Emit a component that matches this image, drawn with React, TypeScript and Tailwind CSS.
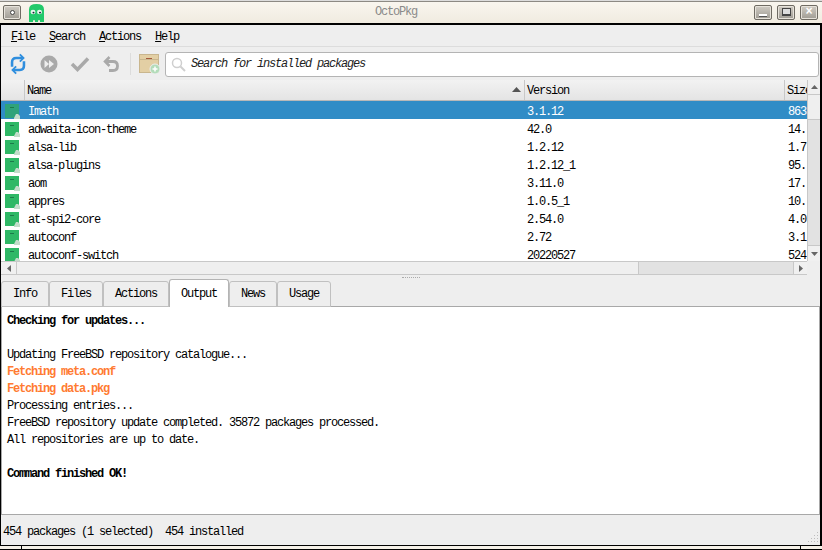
const font = { fontFamily: '"Liberation Mono", monospace' };

const packages = [
  ['Imath', '3.1.12', '863'],
  ['adwaita-icon-theme', '42.0', '14.'],
  ['alsa-lib', '1.2.12', '1.7'],
  ['alsa-plugins', '1.2.12_1', '95.'],
  ['aom', '3.11.0', '17.'],
  ['appres', '1.0.5_1', '10.'],
  ['at-spi2-core', '2.54.0', '4.0'],
  ['autoconf', '2.72', '3.1'],
  ['autoconf-switch', '20220527', '524'],
];

const outputLines = [
  { text: 'Checking for updates...', bold: true },
  { text: '' },
  { text: 'Updating FreeBSD repository catalogue...' },
  { text: 'Fetching meta.conf', orange: true },
  { text: 'Fetching data.pkg', orange: true },
  { text: 'Processing entries...' },
  { text: 'FreeBSD repository update completed. 35872 packages processed.' },
  { text: 'All repositories are up to date.' },
  { text: '' },
  { text: 'Command finished OK!', bold: true },
];

const tabs = ['Info', 'Files', 'Actions', 'Output', 'News', 'Usage'];
const tabWidths: Record<string, string> = {
  Info: 'w-[48px]',
  Files: 'w-[54px]',
  Actions: 'w-[66px]',
  News: 'w-[48px]',
  Usage: 'w-[54px]',
};

function WinButton({ children }: { children: React.ReactNode }) {
  return (
    <div className="mt-[1px] flex h-[15px] w-[18px] items-center justify-center rounded-[2px] border border-[#6f6b63] bg-gradient-to-b from-[#d0ccc4] to-[#a09c94] shadow-[inset_0_0_0_1px_#e6e2da]">
      {children}
    </div>
  );
}

function Ghost() {
  return (
    <svg width="15" height="18" viewBox="0 0 15 20" preserveAspectRatio="none">
      <path d="M0 20V6Q0 0 7.500 0T15 6V20H11V18H9V20H6V18H4V20Z" fill="#22c96b" />
      <circle cx="4" cy="9" r="2.500" fill="#e8f5ec" />
      <circle cx="10.500" cy="9" r="2.500" fill="#e8f5ec" />
      <circle cx="4.500" cy="9.500" r="1" fill="#123" />
      <circle cx="11" cy="9.500" r="1" fill="#123" />
    </svg>
  );
}

function PackageIcon({ selected }: { selected?: boolean }) {
  return (
    <svg width="15" height="15" viewBox="0 0 15 15" className="ml-[4px] mt-[1px]">
      <rect x="0" y="0" width="14" height="14" fill={selected ? '#2fa37a' : '#2fb866'} />
      <rect x="5" y="3" width="4" height="1" fill="#1c7a4a" />
      <path d="M9 14L11 10H13L15 12V15H9Z" fill="#c4dccb" />
    </svg>
  );
}

function Toolbar() {
  return (
    <div className="flex h-[33px] items-center bg-[#eeeeee] pl-[8px] pt-[1px]">
      <svg width="18" height="22" viewBox="0 0 18 24" fill="none" stroke="#2f8ede" strokeWidth="2.800">
        <path d="M14 5.500H7Q2.500 5.500 2.500 10V15" />
        <path d="M4 18.500H11Q15.500 18.500 15.500 14V9" />
        <path d="M11 1.500L15 5.500L11 9.500" strokeWidth="2" />
        <path d="M7 14.500L3 18.500L7 22.500" strokeWidth="2" />
      </svg>
      <svg width="18" height="18" viewBox="0 0 18 18" className="ml-[13px]">
        <circle cx="9" cy="9" r="8.500" fill="#a9a9a9" />
        <path d="M4.500 5V13L9 9ZM9 5V13L14 9Z" fill="#eeeeee" />
      </svg>
      <svg width="20" height="16" viewBox="0 0 20 16" className="ml-[12px]" fill="none" stroke="#a9a9a9" strokeWidth="3.500">
        <path d="M2 8L7.500 13.500L18 2.500" />
      </svg>
      <svg width="16" height="16" viewBox="0 0 16 16" className="ml-[13px]" fill="none" stroke="#a9a9a9" strokeWidth="2.800">
        <path d="M3 5.500H10Q14.500 5.500 14.500 10T10 14.500H6" />
        <path d="M6.500 1L2 5.500L6.500 10" strokeWidth="2.500" />
      </svg>
      <div className="ml-[11px] h-[22px] w-px bg-[#dcdcdc]" />
      <svg width="22" height="22" viewBox="0 0 22 22" className="ml-[8px]">
        <rect x="0.500" y="1.500" width="19" height="18" fill="#e3cfa4" stroke="#c9b68e" />
        <path d="M0 6.500H20" stroke="#c9b68e" />
        <rect x="7" y="5" width="6" height="1" fill="#a5593c" />
        <circle cx="16" cy="16" r="5" fill="#b3dcb9" stroke="#eeeeee" />
        <path d="M16 13.500V18.500M13.500 16H18.500" stroke="#ffffff" strokeWidth="1.500" />
      </svg>
      <div className="ml-[4px] flex h-[25px] w-[654px] items-center rounded-[3px] border border-[#b4b4b4] bg-white pl-[5px]">
        <svg width="15" height="15" viewBox="0 0 15 15" fill="none" stroke="#cfcfcf" strokeWidth="1.500">
          <circle cx="6" cy="6" r="4.500" />
          <path d="M9.500 9.500L14 14" strokeWidth="2" />
        </svg>
        <span className="ml-[5px] text-[12px] italic tracking-[-1.2px] text-[#222]">
          Search for installed packages
        </span>
      </div>
    </div>
  );
}

function PackageTable() {
  return (
    <div className="flex h-[181px] shrink-0">
      <div className="flex min-w-0 flex-1 flex-col">
        <div className="grid h-[21px] shrink-0 grid-cols-[24px_500px_260px_1fr] border-b border-[#b8b8b8] bg-gradient-to-b from-[#f2f2f2] to-[#e4e4e4] text-[12px] tracking-[-1.2px] text-black">
          <div className="border-r border-[#c8c8c8]" />
          <div className="relative flex items-center border-r border-[#c8c8c8] pl-[2px] pt-[2px]">
            Name
            <svg width="9" height="5" viewBox="0 0 9 5" className="absolute right-[3px] top-[7px]">
              <path d="M0 5L4.500 0L9 5Z" fill="#555" />
            </svg>
          </div>
          <div className="flex items-center border-r border-[#c8c8c8] pl-[2px] pt-[2px]">Version</div>
          <div className="flex items-center overflow-hidden pl-[2px] pt-[2px]">Size</div>
        </div>
        <div className="min-h-0 flex-1 overflow-hidden bg-white">
          {packages.map(([name, version, size], i) => (
            <div
              key={name}
              className={`grid h-[18px] grid-cols-[24px_500px_260px_1fr] items-center text-[12px] tracking-[-1.2px] ${i === 0 ? 'bg-[#308cc6] text-white' : 'text-black'}`}
            >
              <PackageIcon selected={i === 0} />
              <div className="pl-[3px] pt-[2px]">{name}</div>
              <div className="pl-[2px] pt-[2px]">{version}</div>
              <div className="overflow-hidden pl-[3px] pt-[2px]">{size}</div>
            </div>
          ))}
        </div>
      </div>
      <div className="flex w-[13px] shrink-0 flex-col border-l border-[#c8c8c8] bg-[#e2e2e2]">
        <div className="flex h-[15px] items-center justify-center border-b border-[#c8c8c8] bg-[#f0f0f0]">
          <svg width="7" height="4" viewBox="0 0 7 4"><path d="M0 4L3.500 0L7 4Z" fill="#666" /></svg>
        </div>
        <div className="h-[25px] border-b border-[#c8c8c8] bg-[#efefef]" />
        <div className="flex-1" />
        <div className="flex h-[16px] items-center justify-center border-t border-[#c8c8c8] bg-[#f0f0f0]">
          <svg width="7" height="4" viewBox="0 0 7 4"><path d="M0 0L3.500 4L7 0Z" fill="#666" /></svg>
        </div>
      </div>
    </div>
  );
}

function HorizontalScroll() {
  return (
    <div className="flex h-[14px] shrink-0 bg-[#eeeeee]">
      <div className="flex flex-1 border-y border-[#c8c8c8]">
        <div className="flex w-[16px] items-center justify-center border-r border-[#c8c8c8] bg-[#f0f0f0]">
          <svg width="4" height="7" viewBox="0 0 4 7"><path d="M4 0L0 3.500L4 7Z" fill="#666" /></svg>
        </div>
        <div className="w-[622px] border-r border-[#c8c8c8] bg-[#efefef]" />
        <div className="flex-1 bg-[#e2e2e2]" />
        <div className="flex w-[14px] items-center justify-center border-l border-[#c8c8c8] bg-[#f0f0f0]">
          <svg width="4" height="7" viewBox="0 0 4 7"><path d="M0 0L4 3.500L0 7Z" fill="#666" /></svg>
        </div>
      </div>
      <div className="w-[13px]" />
    </div>
  );
}

export default function App() {
  return (
    <div className="flex h-[550px] w-[822px] flex-col overflow-hidden bg-[#f5f1e8]" style={font}>
      {/* title bar */}
      <div className="relative flex h-[25px] shrink-0 items-center border-b-2 border-black bg-gradient-to-b from-[#faf7f0] to-[#f0ebe0] pl-[3px] pr-[4px] shadow-[inset_0_1px_0_#dddddd,inset_0_2px_0_#8d8a84]">
        <WinButton>
          <div className="h-[5px] w-[5px] rounded-full border border-[#444] bg-white" />
        </WinButton>
        <div className="ml-[8px] mt-[2px] flex">
          <Ghost />
        </div>
        <div className="flex-1 pr-[6px] text-center text-[12px] tracking-[-1.2px] text-[#8a8a8a]">OctoPkg</div>
        <div className="flex gap-[5px]">
          <WinButton>
            <div className="mt-[6px] h-[2px] w-[8px] bg-white shadow-[0_1px_0_#555]" />
          </WinButton>
          <WinButton>
            <div className="h-[8px] w-[9px] border border-b-2 border-[#444] bg-[#ddd]" />
          </WinButton>
          <WinButton>
            <span className="text-[12px] font-bold leading-none text-white">×</span>
          </WinButton>
        </div>
      </div>

      {/* main window */}
      <div className="flex min-h-0 flex-1 flex-col border-l border-r-2 border-black bg-[#eeeeee]">
        <div className="flex h-[22px] shrink-0 items-center gap-[14px] border-b border-[#dcdcdc] pl-[10px] pt-[3px] text-[12px] tracking-[-1.2px] text-black">
          <span><u>F</u>ile</span>
          <span><u>S</u>earch</span>
          <span><u>A</u>ctions</span>
          <span><u>H</u>elp</span>
        </div>
        <Toolbar />
        <PackageTable />
        <HorizontalScroll />
        <div className="flex h-[4px] shrink-0 items-center justify-center">
          <div className="h-px w-[18px] border-t border-dotted border-[#aaa]" />
        </div>

        {/* tabs */}
        <div className="z-10 -mb-px flex h-[28px] shrink-0 items-end text-[12px] tracking-[-1.2px] text-black">
          {tabs.map(t =>
            t === 'Output' ? (
              <div key={t} className="flex h-[28px] w-[60px] items-center justify-center rounded-t-[3px] border border-b-0 border-[#b4b4b4] bg-white">
                {t}
              </div>
            ) : (
              <div key={t} className={`flex h-[26px] items-center justify-center rounded-t-[3px] border border-[#c0c0c0] bg-[#eeeeee] ${tabWidths[t]}`}>
                {t}
              </div>
            ),
          )}
        </div>

        {/* output */}
        <div className="h-[209px] shrink-0 border border-[#a8a8a8] bg-white pl-[5px] pt-[6px] text-[12px] leading-[17px] tracking-[-1.2px] text-black">
          {outputLines.map((line, i) => (
            <div key={i} className={`h-[17px] ${line.bold ? 'font-bold' : ''} ${line.orange ? 'font-bold text-[#ff7b32]' : ''}`}>
              {line.text}
            </div>
          ))}
        </div>

        {/* status bar */}
        <div className="relative flex min-h-0 flex-1 items-center pl-[2px] pt-[3px] text-[12px] tracking-[-1.2px] text-black">
          454 packages (1 selected)&nbsp;&nbsp;454 installed
          <svg width="11" height="11" viewBox="0 0 11 11" className="absolute bottom-[2px] right-[1px]" fill="#bdbdbd">
            <rect x="9" y="0" width="1" height="1" />
            <rect x="6" y="3" width="1" height="1" /><rect x="9" y="3" width="1" height="1" />
            <rect x="3" y="6" width="1" height="1" /><rect x="6" y="6" width="1" height="1" /><rect x="9" y="6" width="1" height="1" />
            <rect x="0" y="9" width="1" height="1" /><rect x="3" y="9" width="1" height="1" /><rect x="6" y="9" width="1" height="1" /><rect x="9" y="9" width="1" height="1" />
          </svg>
        </div>
      </div>

      {/* bottom window handle */}
      <div className="flex h-[5px] shrink-0 border-y border-black bg-[#f5f1e8]">
        <div className="w-[22px] border-r border-black" />
        <div className="flex-1" />
        <div className="w-[22px] border-l border-black" />
      </div>
    </div>
  );
}
